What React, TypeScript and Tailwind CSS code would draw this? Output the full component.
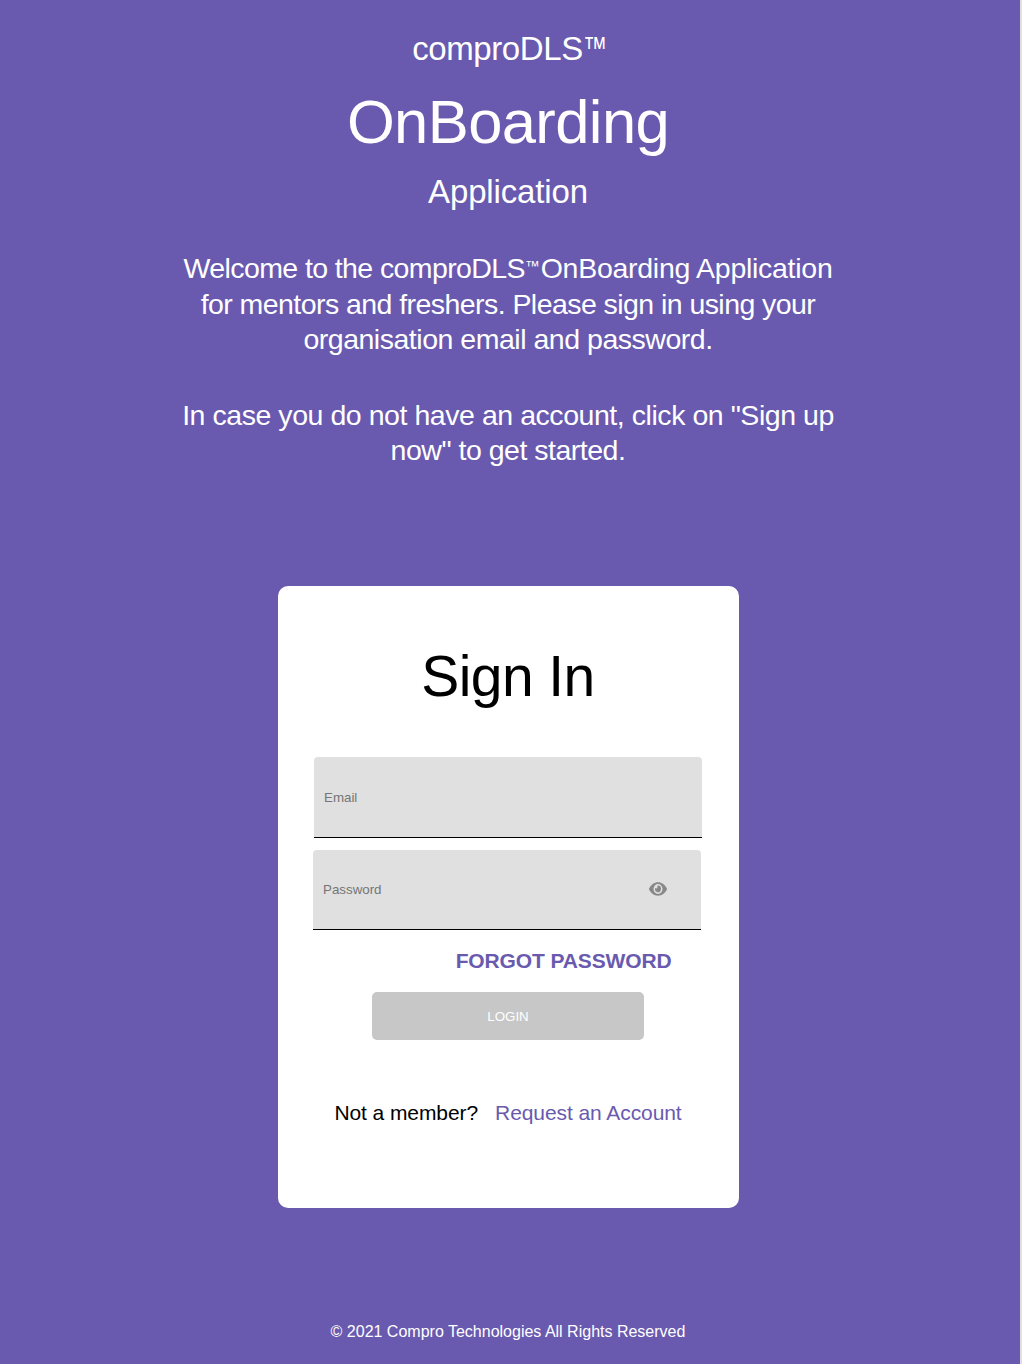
import { useState } from "react";
import { FaEye } from "react-icons/fa";

export default function App() {
  const [email, setEmail] = useState("");
  const [password, setPassword] = useState("");
  return (
    <div className="flex h-[1364px] w-[1022px] overflow-hidden bg-[#e0dfe6] font-['Liberation_Sans',Arial,sans-serif]">
      <main className="flex w-[1020px] flex-col items-center bg-[#695aaf] pr-1 text-center text-white">
        <header className="flex flex-col items-center pt-[29px] whitespace-nowrap">
          <p className="flex h-10 text-[33px] leading-[40px] tracking-[-0.4px]">
            comproDLS
            <span className="w-[21px] origin-left scale-x-[0.76] text-[32px] leading-[38px] tracking-normal">™</span>
          </p>
          <h1 className="mt-[16px] h-[75px] text-[61.5px] leading-[74px] tracking-[-0.6px]">OnBoarding</h1>
          <p className="mt-[12px] h-10 text-[33px] leading-[40px] tracking-[-0.15px]">Application</p>
        </header>
        <section className="mt-[39px] flex flex-col items-center text-[28.5px] leading-[35.5px] whitespace-nowrap">
          <p>
            <span className="block tracking-[-0.28px]"><span className="tracking-[-0.6px]">Welcome to the comproDLS</span><sup className="-top-[0.45em] mr-px text-[15px]">™</sup>OnBoarding Application</span>
            <span className="block tracking-[-0.56px]">for mentors and freshers. Please sign in using your</span>
            <span className="block tracking-[-0.48px]">organisation email and password.</span>
          </p>
          <p className="mt-10">
            <span className="block tracking-[-0.45px]">In case you do not have an account, click on "Sign up</span>
            <span className="block tracking-[-0.49px]">now" to get started.</span>
          </p>
        </section>
        <form className="mt-[117px] flex h-[622px] w-[461px] shrink-0 flex-col items-center rounded-[10px] bg-white text-black">
          <h2 className="mt-[55px] h-[71px] text-[57px] leading-[70px] tracking-[-0.6px]">Sign In</h2>
          <input value={email} onChange={(e) => setEmail(e.target.value)} placeholder="Email" className="mt-[45px] h-[81px] w-[388px] shrink-0 rounded-t border-b border-black bg-[#e0e0e0] px-[10px] pt-px text-[13.33px] placeholder:text-[#757575]" />
          <div className="mt-3 mr-[2px] flex h-20 w-[388px] shrink-0 items-center rounded-t border-b border-black bg-[#e0e0e0] pr-[34px] pl-[10px]">
            <input type="password" value={password} onChange={(e) => setPassword(e.target.value)} placeholder="Password" className="min-w-0 flex-1 pt-px text-[13.33px] placeholder:text-[#757575]" />
            <FaEye preserveAspectRatio="none" className="h-[18px] w-[18px] text-[#888888]" />
          </div>
          <a className="mt-[18px] mr-[67px] h-6 self-end text-[21px] leading-[25px] font-bold tracking-[-0.13px] text-[#695aaf]">FORGOT PASSWORD</a>
          <button type="button" className="mt-5 h-12 w-[272px] shrink-0 rounded-[5px] bg-[#c7c7c7] pt-0.5 text-[13.33px] text-white">LOGIN</button>
          <p className="mt-[60px] flex h-6 text-[21px] leading-[25px] tracking-[-0.08px] whitespace-nowrap">
            <span>Not a member?</span>
            <a className="ml-[17px] text-[#695aaf]">Request an Account</a>
          </p>
        </form>
        <footer className="mt-[114px] h-5 text-[16px] leading-[20px] whitespace-nowrap">© 2021 Compro Technologies All Rights Reserved</footer>
      </main>
    </div>
  );
}
